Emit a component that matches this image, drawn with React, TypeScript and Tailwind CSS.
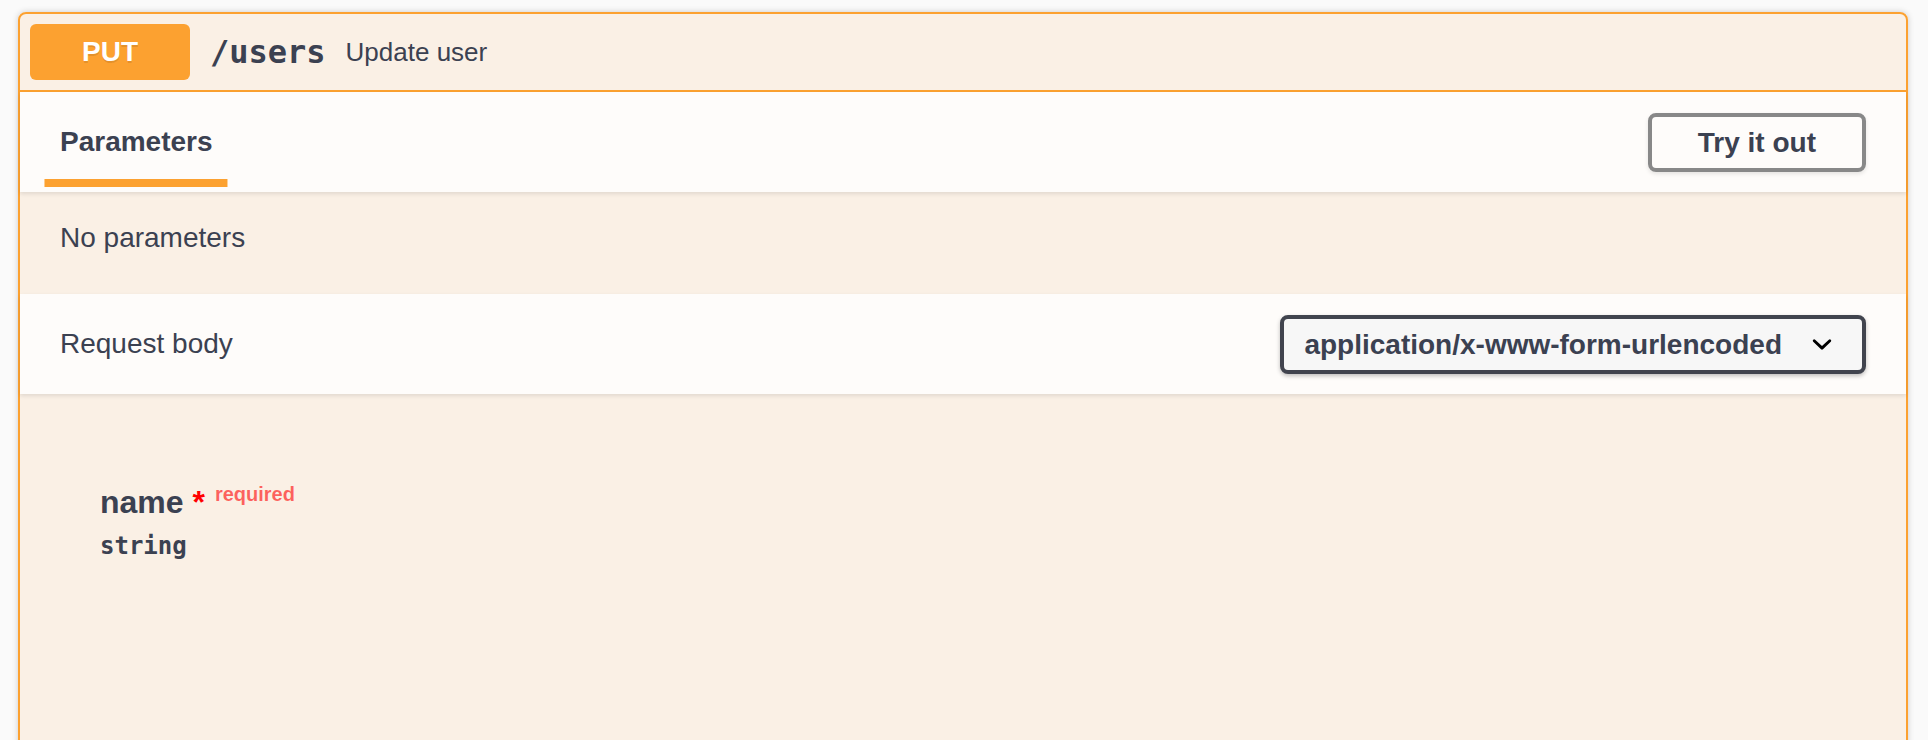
import React from "react";

const ChevronDown: React.FC = () => (
  <svg viewBox="0 0 20 20" className="w-[40px] h-[40px] shrink-0" fill="#000">
    <path d="M13.418 7.859a.695.695 0 0 1 .978 0 .68.68 0 0 1 0 .969l-3.908 3.83a.697.697 0 0 1-.979 0l-3.908-3.83a.68.68 0 0 1 0-.969.695.695 0 0 1 .978 0L10 11l3.418-3.141z" />
  </svg>
);

export default function App() {
  return (
    <div className="h-[740px] overflow-hidden bg-[#fafafa] pt-[12px] pl-[18px] pr-[20px] text-[#3b4151] [font-family:'Liberation_Sans',Arial,sans-serif]">
      <div className="rounded-[8px] border-2 border-[#fca130] bg-[rgba(252,161,48,0.1)] shadow-[0_0_6px_rgba(0,0,0,0.19)]">
        {/* Summary */}
        <div className="flex items-center p-[10px] border-b-2 border-[#fca130]">
          <div className="w-[160px] h-[56px] rounded-[6px] bg-[#fca130] text-white text-[28px] font-bold flex items-center justify-center [text-shadow:0_2px_0_rgba(0,0,0,0.1)]">
            PUT
          </div>
          <span className="px-[20px] text-[32px] font-bold leading-[40px] [font-family:'DejaVu_Sans_Mono',monospace]">
            /users
          </span>
          <span className="text-[26px] leading-[30px]">Update user</span>
        </div>

        {/* Parameters tab header */}
        <div className="relative flex items-center justify-between min-h-[100px] px-[40px] py-[16px] bg-white/80 shadow-[0_2px_4px_rgba(0,0,0,0.1)]">
          <h4 className="text-[28px] font-bold leading-[32px]">
            <span className="relative after:absolute after:content-[''] after:left-1/2 after:-translate-x-1/2 after:bottom-[-30px] after:h-[8px] after:w-[120%] after:bg-[#fca130]">
              Parameters
            </span>
          </h4>
          <button className="border-4 border-[#888] rounded-[8px] px-[46px] py-[10px] text-[28px] font-bold leading-[31px] bg-transparent shadow-[0_2px_4px_rgba(0,0,0,0.1)]">
            Try it out
          </button>
        </div>

        {/* No parameters */}
        <div className="px-[40px] pt-[30px] pb-[40px]">
          <p className="text-[28px] leading-[32px]">No parameters</p>
        </div>

        {/* Request body header */}
        <div className="relative flex items-center justify-between min-h-[100px] px-[40px] py-[16px] bg-white/80 shadow-[0_2px_4px_rgba(0,0,0,0.1)]">
          <h4 className="text-[28px] leading-[32px]">Request body</h4>
          <div className="flex items-center border-4 border-[#41444e] rounded-[8px] bg-[#f7f7f7] pl-[20px] pr-[20px] py-[10px] shadow-[0_2px_4px_rgba(0,0,0,0.25)]">
            <span className="text-[28px] font-bold leading-[31px]">application/x-www-form-urlencoded</span>
            <span className="ml-[20px] h-[31px] flex items-center">
              <ChevronDown />
            </span>
          </div>
        </div>

        {/* Form parameters */}
        <div className="pl-[80px] pt-[84px] h-[420px]">
          <div className="text-[32px] font-bold">
            name
            <span className="text-[#ff0000]">&nbsp;*</span>
            <span className="relative top-[-12px] px-[10px] text-[20px] text-[rgba(255,0,0,0.6)]">required</span>
          </div>
          <div className="pt-[2px] text-[24px] font-bold [font-family:'DejaVu_Sans_Mono',monospace]">string</div>
        </div>
      </div>
    </div>
  );
}
